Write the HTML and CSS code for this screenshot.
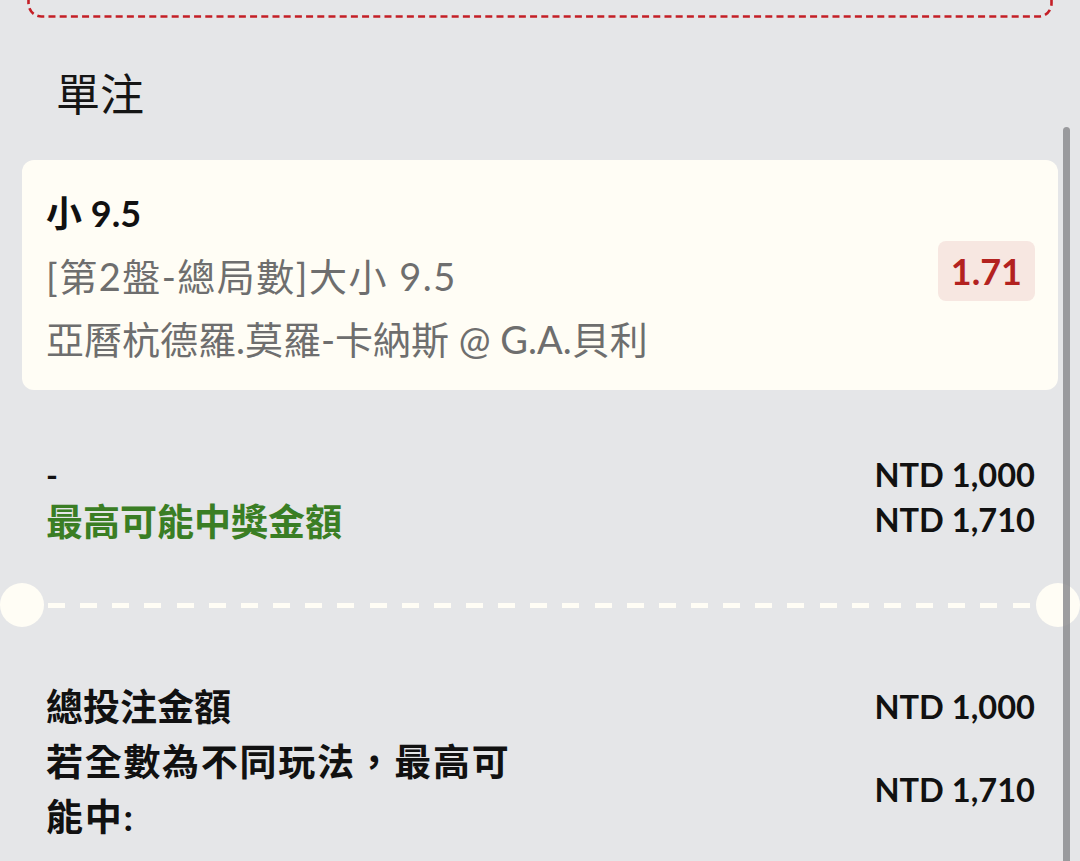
FILE: index.html
```html
<!DOCTYPE html>
<html lang="zh-Hant">
<head>
<meta charset="utf-8">
<title>單注</title>
<link rel="stylesheet" href="styles.css">
</head>
<body>
<div class="topbox">
  <svg class="topbox-svg" width="1026" height="58" viewBox="0 0 1026 58" aria-hidden="true">
    <rect x="1.5" y="1.5" width="1023" height="55" rx="13" ry="13" fill="none" stroke="#c41f26" stroke-width="2.6" stroke-dasharray="7 4.2"/>
  </svg>
</div>
<h2 class="title">單注</h2>
<div class="card">
  <div class="info">
    <div class="pick">小 9.5</div>
    <div class="market">[第2盤-總局數]大小 9.5</div>
    <div class="match">亞曆杭德羅.莫羅-卡納斯 @ G.A.貝利</div>
  </div>
  <div class="odds">1.71</div>
</div>
<div class="stake">
  <div class="row"><span class="dash">-</span><span class="amt">NTD 1,000</span></div>
  <div class="row"><span class="win">最高可能中獎金額</span><span class="amt">NTD 1,710</span></div>
</div>
<div class="sep">
  <span class="hole"></span>
  <span class="dashes"></span>
  <span class="hole"></span>
</div>
<div class="summary">
  <div class="srow"><span class="label">總投注金額</span><span class="amt">NTD 1,000</span></div>
  <div class="srow"><span class="label wide">若全數為不同玩法，最高可能中:</span><span class="amt">NTD 1,710</span></div>
</div>
<div class="scrollbar"></div>
</body>
</html>
```
FILE: styles.css
```css
* { box-sizing: border-box; }
html, body { margin: 0; padding: 0; }
body {
  background: #e5e6e8;
  font-family: Lato, "Noto Sans CJK TC", sans-serif;
  color: #111;
  width: 1080px;
  height: 861px;
  overflow: hidden;
}
.topbox {
  margin: -40px 27px 0;
  height: 58px;
}
.topbox-svg { display: block; }
.title {
  margin: 46px 0 0;
  padding-left: 56px;
  height: 60px;
  line-height: 60px;
  font-size: 44px;
  font-weight: 400;
  color: #151515;
}
.card {
  margin: 36px 22px 0;
  padding: 22px 23px 19px 24px;
  background: #fffdf5;
  border-radius: 12px;
  display: flex;
  align-items: center;
}
.info { flex: 1; }
.pick {
  font-size: 36px;
  font-weight: 700;
  line-height: 63px;
  color: #111;
}
.market, .match {
  font-size: 38px;
  line-height: 63px;
  color: #6e6e6e;
}
.market { letter-spacing: 1.5px; }
.odds {
  background: #f7e7e1;
  color: #b3221f;
  font-weight: 700;
  font-size: 36px;
  height: 60px;
  line-height: 60px;
  padding: 0 13px;
  border-radius: 8px;
  margin-bottom: 12px;
}
.stake {
  margin-top: 62px;
  padding: 0 45px 0 46px;
}
.row {
  display: flex;
  justify-content: space-between;
  align-items: center;
  height: 45px;
}
.dash { font-size: 32px; font-weight: 700; }
.win {
  color: #3a7e24;
  font-size: 37px;
  font-weight: 700;
}
.amt {
  font-size: 32.6px;
  font-weight: 700;
  color: #111;
}
.sep {
  margin-top: 41px;
  height: 44px;
  display: flex;
  align-items: center;
}
.hole {
  width: 44px;
  height: 44px;
  border-radius: 50%;
  background: #fffdf5;
  flex: 0 0 44px;
}
.dashes {
  flex: 1;
  height: 5px;
  margin: 0 6px 0 4px;
  background: repeating-linear-gradient(to right, #fffdf5 0, #fffdf5 17px, transparent 17px, transparent 32.15px);
}
.summary {
  margin-top: 52px;
  padding: 0 45px 0 46px;
}
.srow {
  display: flex;
  justify-content: space-between;
  align-items: center;
}
.label {
  font-size: 37px;
  font-weight: 700;
  line-height: 55px;
  max-width: 480px;
}
.label.wide { letter-spacing: 1.7px; }
.scrollbar {
  position: fixed;
  right: 10px;
  top: 127px;
  bottom: 0;
  width: 7px;
  border-radius: 4px 4px 0 0;
  background: rgba(140, 140, 143, 0.85);
}
```
